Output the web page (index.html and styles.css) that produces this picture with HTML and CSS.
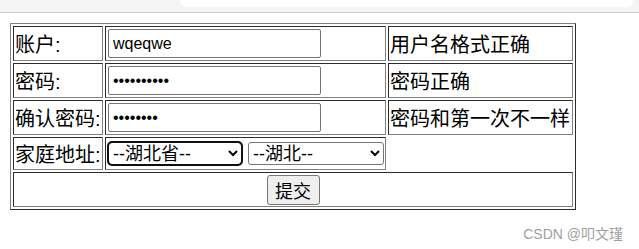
FILE: index.html
```html
<!DOCTYPE html>
<html lang="zh">
<head>
    <meta charset="UTF-8">
    <meta name="viewport" content="width=device-width, initial-scale=1.0">
    <title>注册</title>
    <link rel="stylesheet" href="styles.css">
</head>
<body>

    <div class="chrome">
        <div class="tab"></div>
    </div>

    <div class="page">
        <form>
            <table class="form-table">
                <tr>
                    <td class="label">账户:</td>
                    <td class="field"><input class="text-input" type="text" value="wqeqwe"></td>
                    <td class="msg">用户名格式正确</td>
                </tr>
                <tr>
                    <td class="label">密码:</td>
                    <td class="field"><input class="text-input" type="password" value="1234567890"></td>
                    <td class="msg">密码正确</td>
                </tr>
                <tr>
                    <td class="label">确认密码:</td>
                    <td class="field"><input class="text-input" type="password" value="12345678"></td>
                    <td class="msg">密码和第一次不一样</td>
                </tr>
                <tr class="address-row">
                    <td class="label">家庭地址:</td>
                    <td class="field">
                        <select class="province focused">
                            <option>--湖北省--</option>
                        </select>
                        <select class="city">
                            <option>--湖北--</option>
                        </select>
                    </td>
                </tr>
                <tr>
                    <td class="submit-cell" colspan="3"><button class="submit-btn" type="button">提交</button></td>
                </tr>
            </table>
        </form>
    </div>

    <div class="watermark">CSDN @叩文瑾</div>

</body>
</html>
```

FILE: styles.css
```css
body {
    margin: 0;
    font-family: 'Liberation Sans', 'Noto Sans CJK SC', sans-serif;
    background: #fff;
    color: #000;
}

/* browser top strip */
.chrome {
    display: flex;
    height: 12px;
    background: #f5f5f5;
    border-bottom: 1px solid #c8c8c8;
}

.tab {
    margin-left: 180px;
    width: 453px;
    height: 7px;
    background: #fff;
    border-radius: 0 0 6px 6px;
}

.page {
    padding: 10px 0 0 10px;
}

.form-table {
    border: 1px outset grey;
    border-spacing: 2px;
    font-size: 20px;
}

.form-table td {
    border: 1px inset grey;
    padding: 1px;
    height: 31px;
    white-space: nowrap;
}

.label {
    width: 86px;
}

.field {
    width: 277px;
    font-size: 0;
}

.msg {
    width: 181px;
}

.address-row td {
    height: 28px;
}

.text-input {
    box-sizing: border-box;
    width: 213px;
    height: 29px;
    margin: 0 0 0 1px;
    padding: 1px 4px;
    border: 1px solid #767676;
    border-radius: 2px;
    font-family: 'Liberation Sans', sans-serif;
    font-size: 16px;
    vertical-align: middle;
}

select {
    box-sizing: border-box;
    height: 23px;
    margin: 0 0 0 1px;
    font-family: 'Liberation Sans', 'Noto Sans CJK SC', sans-serif;
    font-size: 18px;
    background-color: #fff;
    border: 1px solid #767676;
    border-radius: 3px;
    vertical-align: middle;
}

.province {
    width: 134px;
}

.city {
    width: 136px;
    margin-left: 6px;
}

.focused {
    outline: 2px solid #101010;
    outline-offset: -1px;
    border-radius: 4px;
}

.submit-cell {
    text-align: center;
}

.submit-btn {
    box-sizing: border-box;
    width: 53px;
    height: 30px;
    padding: 0;
    font-family: 'Noto Sans CJK SC', sans-serif;
    font-size: 18px;
    background: #efefef;
    border: 1px solid #767676;
    border-radius: 3px;
}

.watermark {
    position: absolute;
    right: 16px;
    top: 223px;
    font-size: 14px;
    color: #a0a0a0;
}
```
